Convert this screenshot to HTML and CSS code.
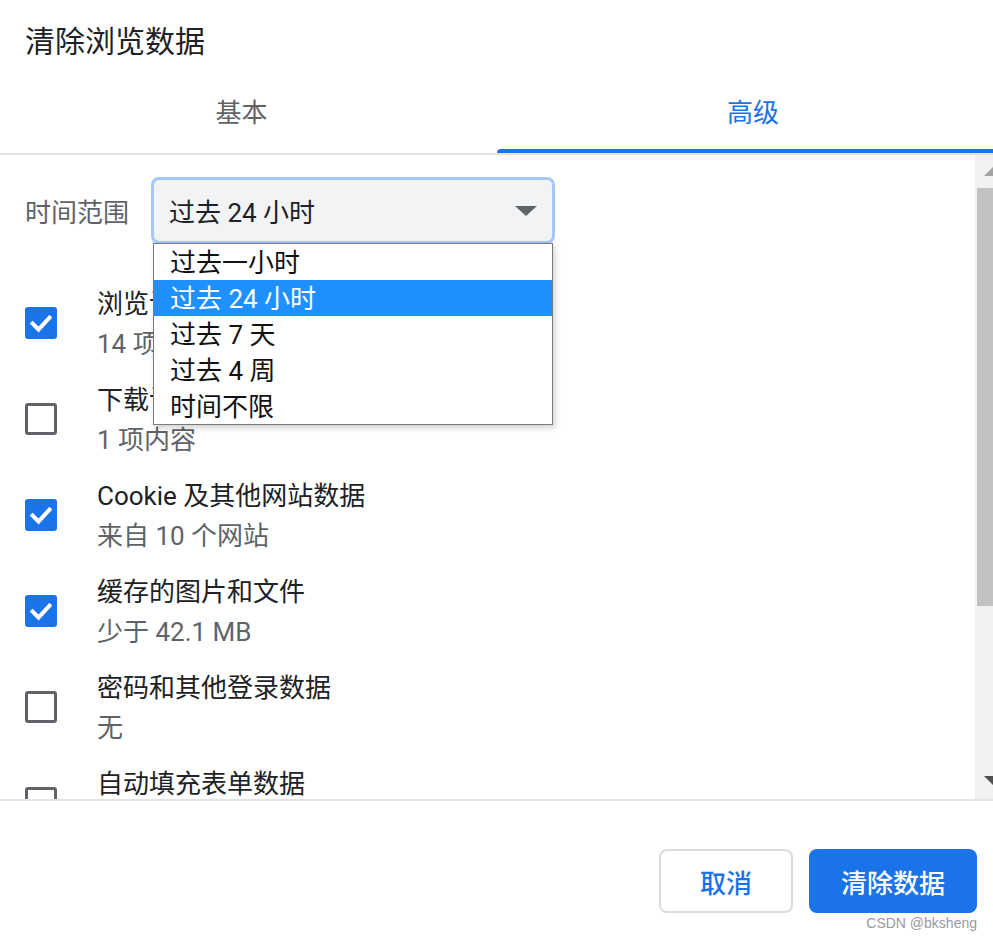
FILE: index.html
```html
<!DOCTYPE html>
<html lang="zh-CN">
<head>
<meta charset="utf-8">
<title>清除浏览数据</title>
<link rel="stylesheet" href="styles.css">
</head>
<body>
<div class="dialog">
  <div class="title">清除浏览数据</div>
  <div class="tabs">
    <div class="tab tab-basic">基本</div>
    <div class="tab tab-adv active">高级<span class="underline"></span></div>
  </div>
  <div class="body">
    <div class="list">
      <div class="range-row">
        <div class="range-label">时间范围</div>
        <div class="select">
          <span class="select-text">过去 24 小时</span>
          <span class="select-arrow"></span>
          <div class="dropdown">
            <div class="option">过去一小时</div>
            <div class="option selected">过去 24 小时</div>
            <div class="option">过去 7 天</div>
            <div class="option">过去 4 周</div>
            <div class="option">时间不限</div>
          </div>
        </div>
      </div>
      <div class="item">
        <span class="cb checked"><svg viewBox="0 0 32 32" width="32" height="32"><path d="M7.5 16.5 L13.5 22.5 L24.5 10.5" fill="none" stroke="#fff" stroke-width="4" stroke-linecap="square"/></svg></span>
        <div class="texts"><div class="t1">浏览记录</div><div class="t2">14 项</div></div>
      </div>
      <div class="item">
        <span class="cb"></span>
        <div class="texts"><div class="t1">下载记录</div><div class="t2">1 项内容</div></div>
      </div>
      <div class="item">
        <span class="cb checked"><svg viewBox="0 0 32 32" width="32" height="32"><path d="M7.5 16.5 L13.5 22.5 L24.5 10.5" fill="none" stroke="#fff" stroke-width="4" stroke-linecap="square"/></svg></span>
        <div class="texts"><div class="t1">Cookie 及其他网站数据</div><div class="t2">来自 10 个网站</div></div>
      </div>
      <div class="item">
        <span class="cb checked"><svg viewBox="0 0 32 32" width="32" height="32"><path d="M7.5 16.5 L13.5 22.5 L24.5 10.5" fill="none" stroke="#fff" stroke-width="4" stroke-linecap="square"/></svg></span>
        <div class="texts"><div class="t1">缓存的图片和文件</div><div class="t2">少于 42.1 MB</div></div>
      </div>
      <div class="item">
        <span class="cb"></span>
        <div class="texts"><div class="t1">密码和其他登录数据</div><div class="t2">无</div></div>
      </div>
      <div class="item">
        <span class="cb"></span>
        <div class="texts"><div class="t1">自动填充表单数据</div><div class="t2">无</div></div>
      </div>
    </div>
    <div class="scrollbar">
      <div class="sb-inner">
        <div class="sb-btn sb-up"><span class="tri-up"></span></div>
        <div class="sb-thumb"></div>
        <div class="sb-space"></div>
        <div class="sb-btn sb-down"><span class="tri-down"></span></div>
      </div>
    </div>
  </div>
  <div class="footer">
    <div class="btn btn-cancel">取消</div>
    <div class="btn btn-primary">清除数据</div>
    <div class="watermark">CSDN @bksheng</div>
  </div>
</div>
</body>
</html>
```

FILE: styles.css
```css
html, body {
  margin: 0;
  padding: 0;
  background: #fff;
  overflow: hidden;
}
body {
  font-family: Roboto, "Noto Sans CJK SC", sans-serif;
  color: #202124;
}
.dialog {
  width: 993px;
  height: 939px;
  overflow: hidden;
  position: relative;
  display: flex;
  flex-direction: column;
}
.title {
  padding: 24px 0 0 25px;
  height: 36px;
  line-height: 36px;
  font-size: 30px;
  color: #202124;
}
.tabs {
  display: flex;
  height: 93px;
  border-bottom: 2px solid #e3e3e3;
}
.tab {
  position: relative;
  box-sizing: border-box;
  text-align: center;
  font-size: 26px;
  line-height: 32px;
  padding-top: 37px;
  color: #5f6368;
}
.tab-basic {
  width: 497px;
  padding-right: 14px;
}
.tab-adv {
  flex: 1;
  padding-left: 16px;
}
.tab.active {
  color: #1a73e8;
}
.underline {
  position: absolute;
  left: 0;
  right: 0;
  bottom: 0;
  height: 4px;
  background: #1a73e8;
  border-radius: 4px 0 0 0;
}
.body {
  display: flex;
  height: 644px;
  border-bottom: 2px solid #e3e3e3;
  overflow: hidden;
}
.list {
  flex: 1;
  overflow: hidden;
  padding-top: 22px;
}
.range-row {
  display: flex;
  align-items: center;
  padding-left: 25px;
  margin-bottom: 31px;
}
.range-label {
  font-size: 26px;
  color: #5f6368;
  width: 126px;
}
.select {
  position: relative;
  box-sizing: border-box;
  width: 404px;
  height: 67px;
  border: 3px solid #a6c8f8;
  border-radius: 8px;
  background: #f1f3f4;
  display: flex;
  align-items: center;
  padding-left: 15px;
}
.select-text {
  flex: 1;
  font-size: 26px;
  color: #202124;
}
.select-arrow {
  width: 0;
  height: 0;
  border-left: 11px solid transparent;
  border-right: 11px solid transparent;
  border-top: 10px solid #5f6368;
  margin-right: 15px;
}
.dropdown {
  position: absolute;
  top: 63px;
  left: -1px;
  width: 400px;
  box-sizing: border-box;
  background: #fff;
  border: 1px solid #7a7a7a;
  box-shadow: 2px 3px 6px rgba(0,0,0,0.18);
  z-index: 5;
}
.option {
  height: 36px;
  box-sizing: border-box;
  padding-top: 2px;
  line-height: 34px;
  font-size: 26px;
  padding-left: 16px;
  color: #111;
}
.option.selected {
  background: #1e90ff;
  color: #fff;
}
.item {
  display: flex;
  align-items: center;
  height: 96px;
  box-sizing: border-box;
  padding: 8px 0 8px 25px;
}
.cb {
  width: 32px;
  height: 32px;
  box-sizing: border-box;
  border: 3px solid #5f6368;
  border-radius: 3px;
  margin-right: 40px;
  flex: none;
  display: flex;
}
.cb.checked {
  border: none;
  background: #1a73e8;
}
.texts {
  display: flex;
  flex-direction: column;
  padding-top: 2px;
}
.t1 {
  font-size: 26px;
  line-height: 40px;
  color: #202124;
}
.t2 {
  font-size: 26px;
  line-height: 40px;
  color: #5f6368;
}
.scrollbar {
  width: 18px;
  flex: none;
  overflow: hidden;
  background: #f1f1f1;
}
.sb-inner {
  width: 36px;
  height: 100%;
  display: flex;
  flex-direction: column;
}
.sb-btn {
  display: flex;
  align-items: center;
  justify-content: center;
  flex: none;
}
.sb-up { height: 33px; }
.sb-down { height: 38px; }
.tri-up {
  width: 0; height: 0;
  border-left: 9px solid transparent;
  border-right: 9px solid transparent;
  border-bottom: 9px solid #a3a3a3;
}
.tri-down {
  width: 0; height: 0;
  border-left: 9px solid transparent;
  border-right: 9px solid transparent;
  border-top: 9px solid #505050;
}
.sb-thumb {
  height: 418px;
  margin-left: 2px;
  background: #c1c1c1;
  flex: none;
}
.sb-space { flex: 1; }
.footer {
  position: relative;
  flex: 1;
  display: flex;
  justify-content: flex-end;
  align-items: flex-start;
  padding: 48px 16px 0 0;
  gap: 16px;
}
.btn {
  box-sizing: border-box;
  height: 64px;
  border-radius: 8px;
  font-size: 26px;
  font-weight: 500;
  display: flex;
  align-items: center;
  justify-content: center;
}
.btn-cancel {
  width: 134px;
  border: 2px solid #dadce0;
  color: #1a73e8;
  background: #fff;
}
.btn-primary {
  width: 168px;
  background: #1a73e8;
  color: #fff;
}
.watermark {
  position: absolute;
  right: 16px;
  bottom: 8px;
  font-family: "Liberation Sans", sans-serif;
  font-size: 14px;
  color: #999;
}
```
